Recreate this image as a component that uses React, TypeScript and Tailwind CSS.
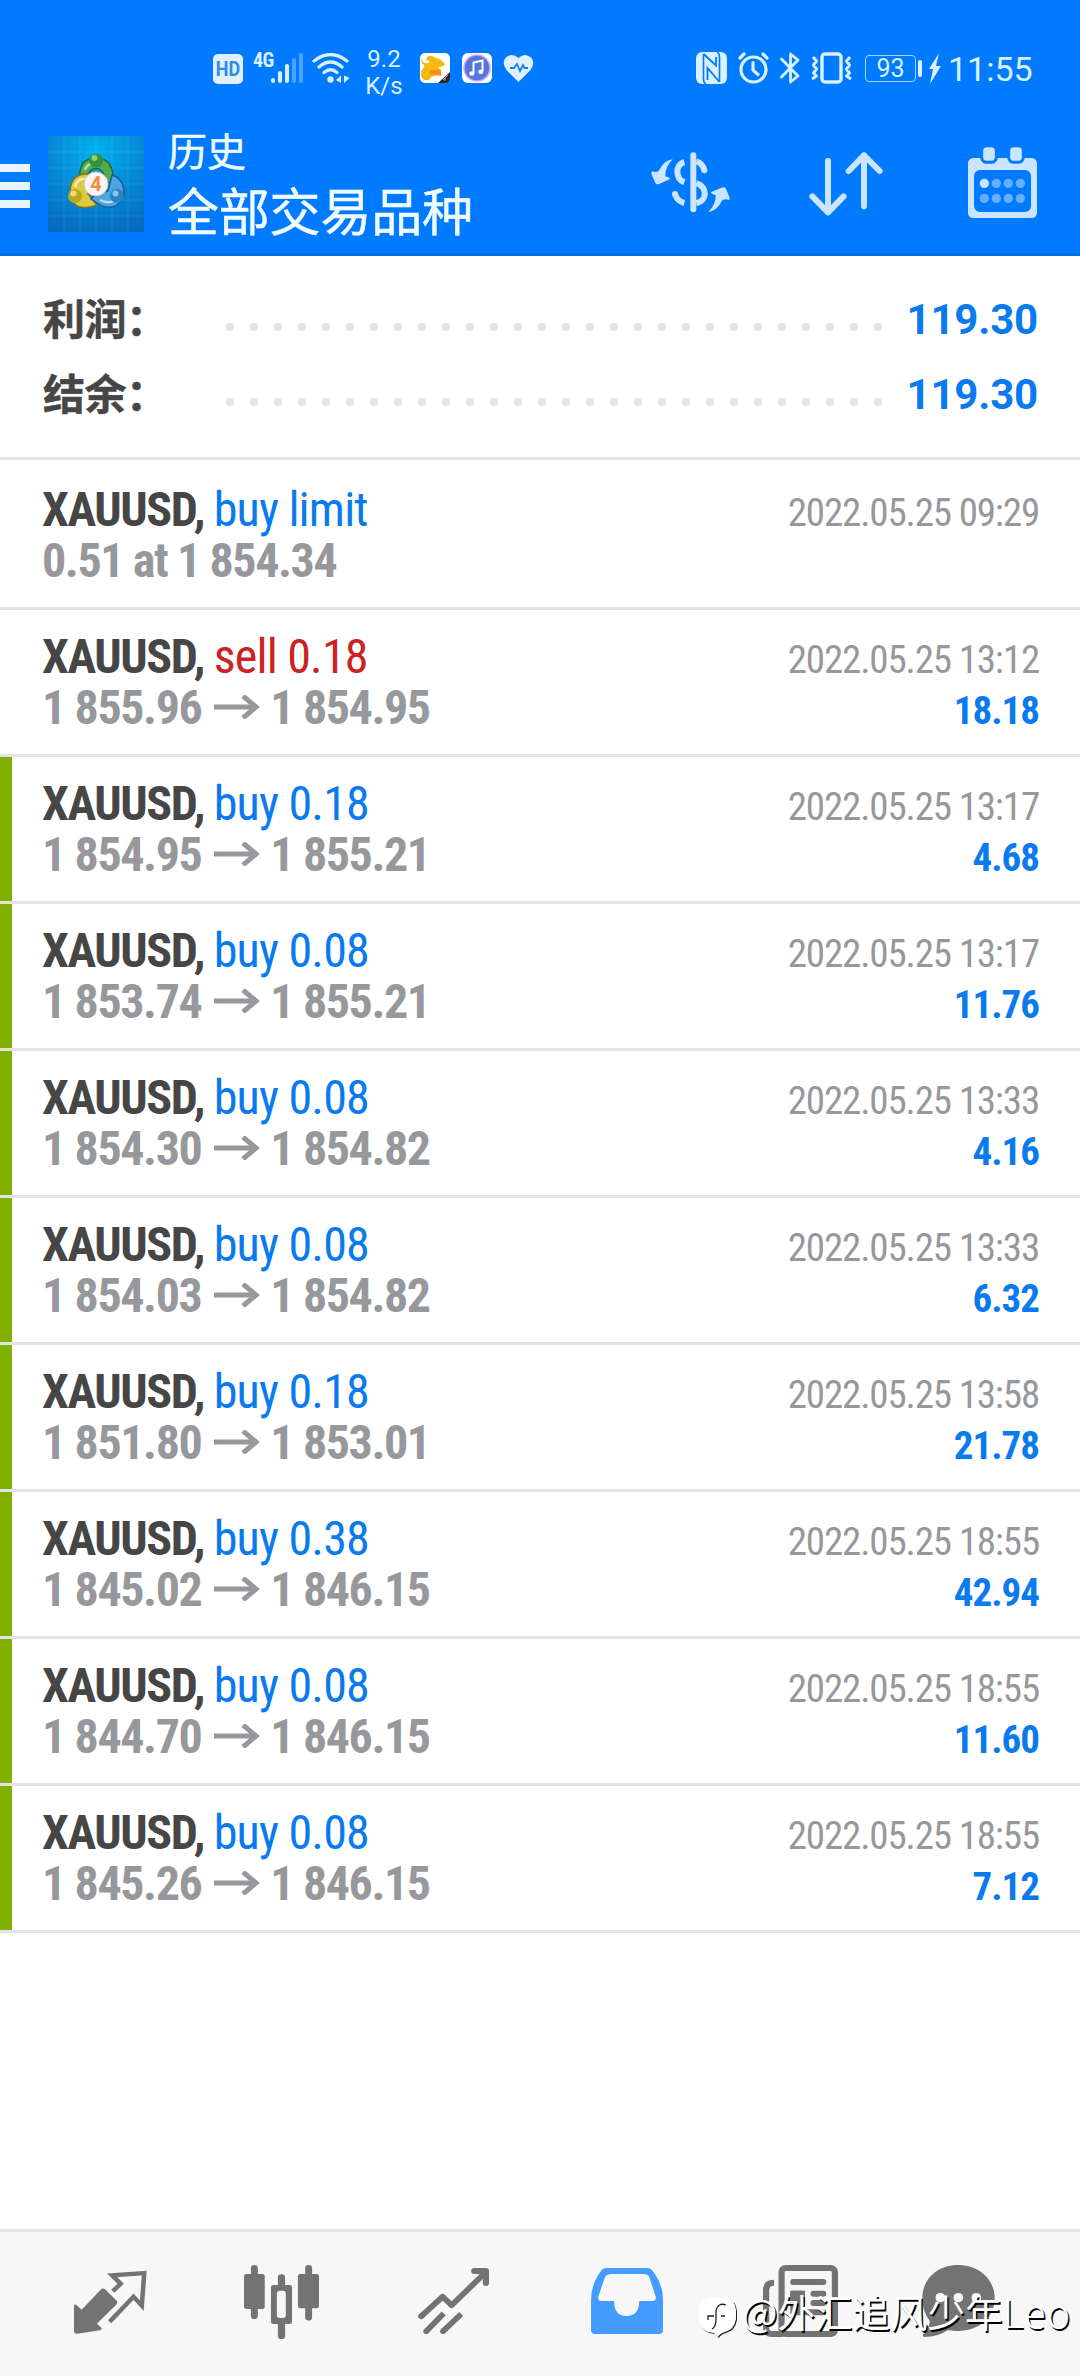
import React from 'react'

const deals = [
  { side: 'buy', label: 'buy limit', order: '0.51 at 1 854.34', time: '2022.05.25 09:29' },
  { side: 'sell', label: 'sell 0.18', open: '1 855.96', close: '1 854.95', time: '2022.05.25 13:12', profit: '18.18' },
  { side: 'buy', label: 'buy 0.18', open: '1 854.95', close: '1 855.21', time: '2022.05.25 13:17', profit: '4.68', tp: true },
  { side: 'buy', label: 'buy 0.08', open: '1 853.74', close: '1 855.21', time: '2022.05.25 13:17', profit: '11.76', tp: true },
  { side: 'buy', label: 'buy 0.08', open: '1 854.30', close: '1 854.82', time: '2022.05.25 13:33', profit: '4.16', tp: true },
  { side: 'buy', label: 'buy 0.08', open: '1 854.03', close: '1 854.82', time: '2022.05.25 13:33', profit: '6.32', tp: true },
  { side: 'buy', label: 'buy 0.18', open: '1 851.80', close: '1 853.01', time: '2022.05.25 13:58', profit: '21.78', tp: true },
  { side: 'buy', label: 'buy 0.38', open: '1 845.02', close: '1 846.15', time: '2022.05.25 18:55', profit: '42.94', tp: true },
  { side: 'buy', label: 'buy 0.08', open: '1 844.70', close: '1 846.15', time: '2022.05.25 18:55', profit: '11.60', tp: true },
  { side: 'buy', label: 'buy 0.08', open: '1 845.26', close: '1 846.15', time: '2022.05.25 18:55', profit: '7.12', tp: true },
]

function StatusBar() {
  return (
    <div className="flex h-28 items-start pt-[46px] text-[#d9f0ff]">
      <div className="mt-2 ml-[213px] flex h-[30px] w-[30px] items-center justify-center rounded-[5px] bg-[#e0f0ff] text-[18px] leading-none font-bold text-[#2b8cf0]">
        <span className="scale-y-110">HD</span>
      </div>
      <span className="mt-[4px] ml-[10px] w-[18px] font-stretch-condensed text-[20px] leading-5 font-bold tracking-[-0.5px]">4G</span>
      <svg className="mt-[7px] h-[30px] w-[33px]" viewBox="0 0 33 30" fill="currentColor">
        <rect x="0" y="25" width="4" height="5" rx="2" />
        <rect x="7" y="18" width="4" height="12" rx="2" />
        <rect x="14" y="11" width="4" height="19" rx="2" />
        <rect x="21" y="5" width="4" height="25" rx="2" opacity=".35" />
        <rect x="28" y="0" width="4" height="30" rx="2" opacity=".35" />
      </svg>
      <svg className="mt-[7px] ml-2 h-[30px] w-[38px]" viewBox="0 0 38 30" fill="none" stroke="currentColor" strokeWidth="3.200" strokeLinecap="round">
        <path d="M2 8Q18.500 -5 35 8M7 14Q18.500 4 30 14M12 19.500Q18.500 14 25 19.500" />
        <circle cx="18.500" cy="26.500" r="3.200" fill="currentColor" stroke="none" />
        <path d="M29 22.500V30L24 27ZM32 22.500V30L37.500 25Z" fill="currentColor" stroke="none" />
      </svg>
      <div className="ml-[12px] w-[44px] text-center text-[24px] leading-[27px]">
        <p>9.2</p>
        <p>K/s</p>
      </div>
      <svg className="mt-[7px] ml-[14px] size-[30px]" viewBox="0 0 30 30">
        <rect width="30" height="30" rx="5" fill="#fff" />
        <path d="M1 5Q4 13 10 9L6 6Q8 2 12 3L16 5Q21 6 25 11Q24 14 18 14L21 17V23Q12 21 9 27H4Q0 24 1 18Q5 14 4 12Q1 10 1 5Z" fill="#f6b80c" />
        <path d="M10 17H21V22Q14 22 10 21Z" fill="#f58a1f" />
        <path d="M30 19V25Q30 30 25 30H18Z" fill="#292522" />
        <path d="M23 27L28 22M25 25V28" stroke="#aaa" strokeWidth="1" />
      </svg>
      <svg className="mt-[7px] ml-[12px] size-[30px]" viewBox="0 0 30 30">
        <rect width="30" height="30" rx="6" fill="#fff" />
        <circle cx="15" cy="15" r="13" fill="#5577dd" stroke="#dca5f4" strokeWidth="1.500" />
        <path d="M11.500 20V9.500L20.500 7.500V18" fill="none" stroke="#fff" strokeWidth="2" />
        <ellipse cx="9.800" cy="20.500" rx="2.600" ry="2.200" fill="#fff" />
        <ellipse cx="18.800" cy="18.800" rx="2.600" ry="2.200" fill="#fff" />
      </svg>
      <svg className="mt-[8px] ml-[11px] h-[29px] w-[31px]" viewBox="0 0 31 29">
        <path d="M15.500 28L3.500 16Q-1.500 9 2.500 4Q9 -2 15.500 4Q22 -2 28.500 4Q32.500 9 27.500 16Z" fill="#e0f0ff" />
        <path d="M7 14H11L14 10L17 17L20 11L21.500 14H25" fill="none" stroke="#1880e8" strokeWidth="1.800" />
      </svg>

      <svg className="mt-[6px] ml-[162px] h-8 w-8" viewBox="0 0 32 32">
        <rect x="0" y="0" width="31" height="32" rx="6" fill="#d9f0ff" />
        <path d="M7.500 2V27Q7.500 31 10 32M23.500 30V5Q23.500 1 21 0" fill="none" stroke="#007aff" strokeWidth="1.600" />
        <path d="M7.500 2L20 13.500V5M11.500 28V16L23.500 30" fill="none" stroke="#007aff" strokeWidth="1.800" />
      </svg>
      <svg className="mt-[6px] ml-[10px] h-8 w-[31px]" viewBox="0 0 31 32" fill="none" stroke="currentColor" strokeWidth="3.200" strokeLinecap="round" strokeLinejoin="round">
        <circle cx="15.500" cy="17.500" r="12.500" />
        <path d="M15 10.500V18L20 22.500M2 6L6 2M29 6L25 2" />
      </svg>
      <svg className="mt-[6px] ml-[11px] h-8 w-5" viewBox="0 0 20 32" fill="none" stroke="currentColor" strokeWidth="2.800" strokeLinecap="round" strokeLinejoin="round">
        <path d="M1.500 7L18 24L10.500 30V2L18 8L1.500 25" />
      </svg>
      <svg className="mt-[6px] ml-[11px] h-8 w-[41px]" viewBox="0 0 41 32" fill="none" stroke="currentColor" strokeWidth="3.400" strokeLinejoin="round">
        <rect x="11" y="2" width="19" height="28" rx="3" />
        <path d="M2 5L5.500 9L2.500 13L5.500 17L2.500 21L5.500 24L1 27M39 5L35.500 9L38.500 13L35.500 17L38.500 21L35.500 24L40 27" strokeWidth="3" />
      </svg>
      <div className="mt-[9px] ml-[13px] flex h-[27px] w-[51px] items-center justify-center rounded-[4px] border border-[#9fd4ff] text-[25px] leading-none">
        93
      </div>
      <div className="mt-[14px] ml-[2px] h-[17px] w-[4px] rounded-full bg-[#d9f0ff]" />
      <svg className="mt-[7px] ml-[7px] h-[31px] w-[12px]" viewBox="0 0 12 31" fill="currentColor">
        <path d="M10 0L0 16H4L1 31L12 13H7Z" />
      </svg>
      <span className="mt-[3px] ml-[7px] text-[34px] leading-[40px]">11:55</span>
    </div>
  )
}

function AppLogo() {
  return (
    <svg className="ml-[18px] size-24" viewBox="0 0 96 96">
      <defs>
        <radialGradient id="sky" cx=".5" cy=".15" r=".95">
          <stop offset="0" stopColor="#02b2ee" />
          <stop offset=".5" stopColor="#0589d6" />
          <stop offset="1" stopColor="#0467bb" />
        </radialGradient>
      </defs>
      <rect width="96" height="96" fill="url(#sky)" />
      <path d="M16 0V96M32 0V96M48 0V96M64 0V96M80 0V96M0 16H96M0 32H96M0 48H96M0 64H96M0 80H96" stroke="#fff" strokeOpacity=".09" />
      <path d="M32 47Q29 22 48 22Q67 22 65 48L58 46Q55 31 48 33Q41 31 38 46Z" fill="#52ab50" stroke="#216c2f" strokeWidth="1.500" />
      <path d="M40 38Q21 37 22 60Q27 77 49 69L40 58Z" fill="#dccb3e" stroke="#7c7620" strokeWidth="1.500" />
      <path d="M64 39Q77 43 76 60Q66 81 43 63L48 58L60 55Z" fill="#4da5de" stroke="#145d9e" strokeWidth="1.500" />
      <path d="M27 51Q29 42 37 43M37 34Q39 28 45 27M52 64Q60 68 66 65" fill="none" stroke="#fff" strokeOpacity=".6" strokeWidth="2.500" />
      <circle cx="48" cy="24.500" r="7" fill="#35923c" />
      <circle cx="46.500" cy="22" r="3" fill="#8bcf82" />
      <circle cx="27" cy="60" r="7" fill="#b9a728" />
      <circle cx="25.500" cy="57.500" r="3" fill="#ebdf77" />
      <circle cx="69" cy="60" r="7" fill="#2c82bf" />
      <circle cx="67.500" cy="57.500" r="3" fill="#86c6ea" />
      <circle cx="48" cy="48" r="12" fill="#f5f5f5" stroke="#c6c6bd" />
      <text x="48" y="55" textAnchor="middle" fontSize="20" fontWeight="700" fill="#f28c35">4</text>
    </svg>
  )
}

function Header() {
  return (
    <header className="h-64 border-b-[3px] border-[#006fe0] bg-[#007aff]">
      <StatusBar />
      <div className="flex items-start">
        <div className="mt-[52px] flex w-[30px] flex-col gap-[10px]">
          <div className="h-2 bg-[#e8f5ff]" />
          <div className="h-2 bg-[#e8f5ff]" />
          <div className="h-2 bg-[#e8f5ff]" />
        </div>
        <div className="mt-6">
          <AppLogo />
        </div>
        <div className="mt-[15px] ml-[24px] flex-1 text-[#effbff] [-webkit-text-stroke:0.5px_#effbff]">
          <p className="text-[39px] leading-[52px]">历史</p>
          <h1 className="mt-[1px] text-[51px] leading-[68px] tracking-[-0.2px]">全部交易品种</h1>
        </div>
        <svg className="mt-[39.500px] h-[61px] w-[79px]" viewBox="92 95 237 183" fill="none" stroke="#cce5ff" strokeWidth="18">
          <path d="M219 105V267" strokeLinecap="round" />
          <path d="M192 125C164 133 164 175 192 186M228 188C262 202 262 240 228 249" />
          <path d="M228 123Q247 128 252 150" />
          <path d="M164 221Q170 242 192 248" />
          <circle cx="252" cy="150" r="9" fill="#cce5ff" stroke="none" />
          <circle cx="164" cy="221" r="9" fill="#cce5ff" stroke="none" />
          <g fill="#cce5ff" stroke="none">
            <path d="M157 117Q131 120 115 152Q104 158 95 152L93 160L105 188Q110 194 118 190L148 177Q152 173 135 168Q134 140 157 117Z" />
            <path d="M157 117Q131 120 115 152Q104 158 95 152L93 160L105 188Q110 194 118 190L148 177Q152 173 135 168Q134 140 157 117Z" transform="rotate(180 210.500 196)" />
          </g>
        </svg>
        <svg className="mt-[40px] ml-[79px] h-[64px] w-[74px]" viewBox="567 95 222 192" fill="none" stroke="#cce5ff" strokeWidth="18" strokeLinecap="round" strokeLinejoin="round">
          <path d="M624 122V276M577 228L624 276L671 228M732 258V105M686 152L732 105L779 152" />
        </svg>
        <svg className="mt-[35px] mr-[43px] ml-[85px] h-[71px] w-[69px]" viewBox="1044 81 207 213" fill="#cce5ff">
          <rect x="1044" y="114" width="207" height="180" rx="16" />
          <rect x="1062" y="150" width="171" height="126" rx="18" fill="#007aff" />
          <rect x="1085" y="77" width="44" height="50" rx="15" stroke="#007aff" strokeWidth="9" />
          <rect x="1166" y="77" width="44" height="50" rx="15" stroke="#007aff" strokeWidth="9" />
          <circle cx="1093" cy="190" r="14" />
          <g fill="#66afff">
            <circle cx="1129" cy="190" r="14" />
            <circle cx="1165" cy="190" r="14" />
            <circle cx="1201" cy="190" r="14" />
            <circle cx="1093" cy="235" r="14" />
            <circle cx="1129" cy="235" r="14" />
            <circle cx="1165" cy="235" r="14" />
            <circle cx="1201" cy="235" r="14" />
          </g>
        </svg>
      </div>
    </header>
  )
}

function SummaryRow({ title, value }) {
  return (
    <div className="flex h-[75px] items-center text-[42px] leading-[60px] font-bold">
      <span className="mt-[2px] w-[183px] tracking-[-0.5px] text-[#464646] [-webkit-text-stroke:0.5px_#464646]">{title}</span>
      <div className="mt-[15px] flex w-[656px] justify-between">
        {Array.from({ length: 28 }, (_, i) => (
          <div key={i} className="size-2 rounded-full bg-[#e4e4e4]" />
        ))}
      </div>
      <span className="flex-1 text-right tracking-[-0.2px] text-[#0a7aef]">{value}</span>
    </div>
  )
}

function DealRow({ deal, first }) {
  return (
    <div className={first ? 'flex h-[150px] border-b-[3px] border-[#e4e4e4] pt-[3px]' : 'flex h-[147px] border-b-[3px] border-[#e4e4e4]'}>
      <div className={deal.tp ? 'w-3 bg-[#80b000]' : 'w-3'} />
      <div className="flex flex-1 justify-between pt-[21px] pr-[42px] pl-[30px] font-stretch-condensed">
        <div className="text-[48px] leading-[51px] tracking-[-1.4px] whitespace-pre">
          <div className="flex">
            <p className="font-bold text-[#464646]">XAUUSD, </p>
            <p className={deal.side === 'sell' ? 'tracking-[-0.8px] text-[#cc2222]' : 'tracking-[-0.8px] text-[#0a7aef]'}>{deal.label}</p>
          </div>
          {deal.order ? (
            <p className="font-bold text-[#97989c]">{deal.order}</p>
          ) : (
            <div className="flex font-bold text-[#97989c]">
              <p>{deal.open}</p>
              <svg className="mt-[13px] mr-[10px] ml-[13px] h-6 w-[46px]" viewBox="0 0 46 24" fill="none" stroke="currentColor">
                <path d="M0 12H43" strokeWidth="5" />
                <path d="M29 1L42 12L29 23" strokeWidth="5" />
              </svg>
              <p>{deal.close}</p>
            </div>
          )}
        </div>
        <div className="pt-[4px] text-right text-[39px] leading-[51px]">
          <p className="mr-[-1px] tracking-[-1.15px] text-[#97989c]">{deal.time}</p>
          <p className="mr-[-1px] font-bold tracking-[-1px] text-[#0a7aef]">{deal.profit}</p>
        </div>
      </div>
    </div>
  )
}

function TabBar() {
  return (
    <nav className="relative flex h-[147px] items-start border-t-[3px] border-[#e4e4e4] bg-[#f7f7f7] text-[#737373]">
      <svg className="mt-[38px] ml-[74px] h-[64px] w-[73px]" viewBox="215 211 211 192" preserveAspectRatio="none" fill="currentColor">
        <path d="M215 318Q216 312 222 316L237 330L292 270Q299 263 306 270L337 302Q343 308 337 315L281 372L294 384Q297 390 290 392L225 402Q215 403 215 393Z" />
        <path d="M327 275L350 252L325 227L418 220L411 318L387 291L318 366" fill="none" stroke="currentColor" strokeWidth="13" />
      </svg>
      <svg className="mt-[33px] ml-[97px] h-[74px] w-[75px]" viewBox="709 195 217 222" preserveAspectRatio="none" fill="currentColor">
        <rect x="729" y="195" width="20" height="162" rx="10" />
        <rect x="709" y="222" width="60" height="105" rx="7" />
        <rect x="886" y="195" width="20" height="167" rx="10" />
        <rect x="865" y="222" width="61" height="103" rx="7" />
        <rect x="807" y="223" width="21" height="194" rx="10" />
        <rect x="787" y="255" width="61" height="117" rx="7" />
        <rect x="804" y="272" width="26" height="82" rx="9" fill="#f7f7f7" />
      </svg>
      <svg className="mt-[36px] ml-[99px] h-[66px] w-[71px]" viewBox="1213 204 207 198" preserveAspectRatio="none" fill="none" stroke="currentColor" strokeWidth="17" strokeLinejoin="round">
        <path d="M1222 349L1285 290L1311 316L1408 219" strokeLinecap="round" />
        <path d="M1377 213H1411V249" strokeWidth="18" strokeLinecap="round" />
        <path d="M1237 394L1288 340M1286 394L1339 342" />
        <path d="M1237 394L1240 391M1286 394L1289 391" strokeLinecap="round" />
      </svg>
      <svg className="mt-[36px] ml-[102px] h-[66px] w-[72px]" viewBox="147 204 209 198" preserveAspectRatio="none" fill="#439cff" fillRule="evenodd">
        <path d="M180 208Q185 204 192 204H310Q318 204 323 209Q356 250 356 300V390Q356 402 344 402H160Q147 402 147 390V300Q147 250 180 208ZM205 222H300Q312 222 316 231L335 290Q337 302 326 303H287C287 333 274 348 250 348C226 348 214 333 214 303H178Q166 303 168 290L187 233Q192 222 205 222Z" />
      </svg>
      <svg className="mt-[33px] ml-[100px] h-[72px] w-[75px]" viewBox="646 195 218 216" preserveAspectRatio="none" fill="none" stroke="currentColor" strokeWidth="18">
        <rect x="700" y="204" width="155" height="198" rx="12" />
        <path d="M678 248Q655 248 655 270V385Q655 402 672 402H705" />
        <path d="M734 246H821M734 281H758M793 281H821M793 309H821M734 337H821" strokeLinecap="round" />
        <rect x="734" y="281" width="25" height="40" fill="currentColor" />
      </svg>
      <svg className="mt-[33px] ml-[84px] h-[72px] w-[73px]" viewBox="1108 195 211 216" preserveAspectRatio="none" fill="currentColor">
        <path d="M1212 195C1275 195 1318 240 1318 294C1318 350 1275 393 1212 393Q1196 393 1183 390Q1155 411 1114 411Q1107 408 1112 402Q1127 390 1131 364Q1109 335 1109 294C1109 240 1150 195 1212 195Z" />
        <g fill="#f7f7f7">
          <circle cx="1161" cy="293" r="14" />
          <circle cx="1213" cy="293" r="14" />
          <circle cx="1265" cy="293" r="14" />
        </g>
      </svg>
      <div className="absolute top-[54px] left-[699px] flex items-start text-white">
        <svg className="mt-[10px] h-[43px] w-[39px]" viewBox="0 0 39 43">
          <path d="M12 3H27Q37 4 38 15V24Q36 35 27 37Q21 39 20 42L16 38Q3 37 1 26V15Q2 4 12 3Z" fill="#222" />
          <path d="M11 2H26Q36 3 37 14V23Q35 34 26 36Q20 38 19 41L15 37Q2 36 0 25V14Q1 3 11 2Z" fill="#fff" />
          <path d="M27 9Q19 6 17 15V23Q17 31 13 33M9 24V20H15M22 20H26" fill="none" stroke="#222" strokeWidth="1.300" />
        </svg>
        <p className="ml-[4px] flex font-['Noto_Sans_CJK_SC',sans-serif] text-[37.500px] leading-[50px] whitespace-nowrap [text-shadow:1.500px_1.500px_0_#000]">
          @外汇追风少年<span className="text-[40px] font-light tracking-[1px]">Leo</span>
        </p>
      </div>
    </nav>
  )
}

export default function App() {
  return (
    <div className="flex h-[2376px] w-[1080px] flex-col overflow-hidden bg-white font-[Roboto,'Noto_Sans_CJK_SC',sans-serif]">
      <Header />
      <section className="h-[204px] border-b-[3px] border-[#e4e4e4] pt-[26px] pr-[42px] pl-[43px]">
        <SummaryRow title="利润：" value="119.30" />
        <SummaryRow title="结余：" value="119.30" />
      </section>
      <main className="flex-1">
        {deals.map((deal, index) => (
          <DealRow key={index} deal={deal} first={index === 0} />
        ))}
      </main>
      <TabBar />
    </div>
  )
}
